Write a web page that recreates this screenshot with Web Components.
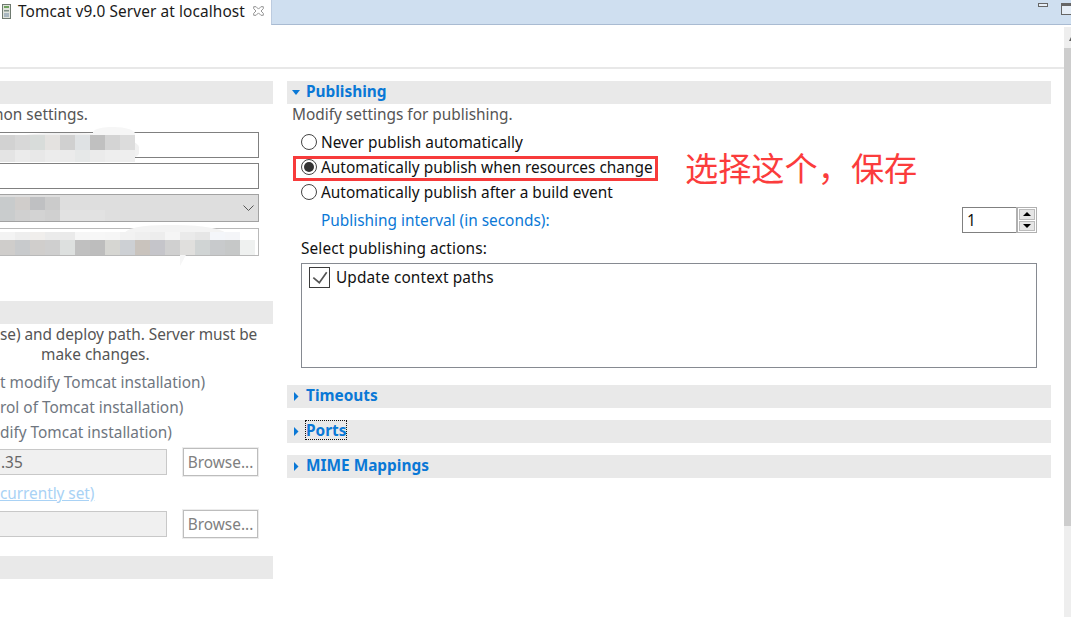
<!DOCTYPE html>
<html lang="en"><head><meta charset="utf-8"><title>Tomcat v9.0 Server at localhost</title>
<style>html,body{margin:0;height:617px;overflow:hidden;background:#fff;font-family:"Noto Sans","Noto Sans CJK SC",sans-serif}</style></head>
<body>
<server-editor></server-editor>
<script>
const def=(name,css,html)=>{customElements.define(name,class extends HTMLElement{
  constructor(){super();this.attachShadow({mode:'open'}).innerHTML=`<style>${css}</style>${typeof html==='function'?'':html}`}
  connectedCallback(){if(typeof html==='function'){this.shadowRoot.innerHTML=`<style>${css}</style>${html(this)}`}}
})};
const F='font:15.4px/20px "Noto Sans","Noto Sans CJK SC",sans-serif;';

def('editor-tabbar',`:host{display:flex;height:25px;box-sizing:border-box;position:relative;${F}}
.tab{width:271px;display:flex;align-items:flex-start;background:#fff}
.tab svg.i{margin:4px 0 0 2px;flex:none}
.tab span{margin:2px 0 0 7px;color:#1a1a1a;white-space:nowrap;letter-spacing:.1px}
.tab svg.x{position:absolute;left:253px;top:6px}
.rest{flex:1;display:flex;gap:13px;justify-content:flex-end;background:#cfdff0;border-left:1px solid #bccbdf;border-bottom:1px solid #a9bbd2;overflow:hidden;align-items:flex-start}
.min{border:1px solid #666;margin-top:3px;background:#e6eef7;width:8px;height:2px}
.max{width:16px;flex:none;height:8px;border:1px solid #666;border-top-width:3px;margin:3px -8px 0 0;background:#e6eef7}`,
`<div class="tab"><svg class="i" width="9" height="15" viewBox="0 0 9 15"><rect x=".5" y=".5" width="8" height="14" fill="#dfe3dc" stroke="#6f7a70"/><rect x="2" y="2" width="5" height="2" fill="#6fa35f"/><rect x="2" y="6" width="5" height="1.5" fill="#7f8f86"/><rect x="2" y="9" width="5" height="4" fill="#a9b7c0"/></svg><span>Tomcat v9.0 Server at localhost</span>
<svg class="x" width="11" height="10" viewBox="0 0 11 10" fill="#fff" stroke="#8a8a8a" stroke-width=".9"><path d="M.7.7h2.4l2.4 2.4L7.9.7h2.4v2L8 5l2.3 2.3v2H7.9L5.5 6.9 3.1 9.3H.7v-2L3 5 .7 2.7z"/></svg></div>
<div class="rest"><div class="min"></div><div class="max"></div></div>`);

def('section-head',`:host{display:flex;align-items:flex-start;height:23px;background:#e9e9e9;color:#0a78d6;font:700 15.4px/20px "Noto Sans","Noto Sans CJK SC",sans-serif;position:relative;padding-left:19px;white-space:nowrap}
svg{position:absolute;fill:#0a78d6}
span{margin-top:1px;height:18px}
.open{left:5px;top:9px}.closed{left:7px;top:6.5px}
.f{outline:1px dotted #111}`,
el=>`${el.hasAttribute('open')?'<svg class="open" width="8" height="5"><path d="M0 0h8L4 5z"/></svg>':el.hasAttribute('text')?'<svg class="closed" width="5" height="9"><path d="M0 0l4.5 4.5L0 9z"/></svg>':''}<span class="${el.hasAttribute('focus')?'f':''}">${el.getAttribute('text')||''}</span>`);

def('text-line',`:host{display:block;box-sizing:border-box;padding-top:1px;${F}color:var(--c,#555);white-space:nowrap;overflow:hidden}`,`<slot></slot>`);

def('radio-row',`:host{display:flex;align-items:center;height:25px;padding-left:14px;${F}color:#111;white-space:nowrap;letter-spacing:.01px}
i{width:14px;height:14px;border:1px solid #444;border-radius:50%;margin-right:4px;display:grid;place-items:center;background:#fff;flex:none}
b{width:10px;height:10px;border-radius:50%;background:#333}
span{padding-top:2px}`,
el=>`<i>${el.hasAttribute('checked')?'<b></b>':''}</i><span><slot></slot></span>`);

def('spin-box',`:host{display:flex;width:75px;height:26px;box-sizing:border-box;${F}color:#111}
.v{width:54px;box-sizing:border-box;border:1px solid #808080;border-right:0;padding:3px 0 0 4px;line-height:20px}
.b{flex:1;border:1px solid #b0b0b0;border-left:2px solid #b0b0b0;display:flex;flex-direction:column;gap:1px;padding:1px;background:#fff}
.b div{flex:1;background:#e6e6e6;border:1px solid #bbb;display:grid;place-items:center}
svg{display:block}`,
`<div class="v"><slot></slot></div><div class="b"><div><svg width="8" height="4"><path d="M4 0l4 4H0z"/></svg></div><div><svg width="8" height="4"><path d="M0 0h8L4 4z"/></svg></div></div>`);

def('check-row',`:host{display:flex;align-items:flex-start;${F}color:#111;white-space:nowrap;letter-spacing:.12px}
.c{width:19px;height:19px;border:1px solid #3c3c3c;margin:0 6px 0 0;flex:none;background:#fff}
svg{display:block}
span{margin-top:1px}`,
`<div class="c"><svg width="19" height="19" viewBox="1 1 19 19"><path d="M4.3 10.7l6 5L17.7 5.3" fill="none" stroke="#555" stroke-width="1.7"/></svg></div><span><slot></slot></span>`);

def('text-field',`:host{display:flex;align-items:center;position:relative;box-sizing:border-box;${F}border:1px solid #808080;background:#fff;color:#666;padding:2px 0 0 2px}
:host([combo]){background:#dedede;border:1px solid #a2a2a2}
:host([off]){background:#f0f0f0;border:1px solid #c8c8c8}
:host([faint]){border-color:#b9b9b9}
svg{position:absolute;right:4px;top:50%;margin-top:-3px}`,
el=>`<slot></slot>${el.hasAttribute('combo')?'<svg width="11" height="6"><path d="M.5.5l5 5 5-5" fill="none" stroke="#555"/></svg>':''}`);

def('browse-btn',`:host{display:grid;place-items:center;box-sizing:border-box;width:75px;height:28px;padding-top:2px;border:1px solid #bdbdbd;outline:1px solid #ececec;background:#fff;color:#808080;${F}}`,`<slot></slot>`);

def('blur-patch',`:host{position:absolute;display:grid;pointer-events:none;z-index:2}
div{height:100%}`,
el=>{const c=(el.getAttribute('cells')||'').split(' ');
 return `<style>:host{grid-template-columns:repeat(${c.length},15px);}</style>`+c.map(x=>`<div style="background:${x}"></div>`).join('')});

def('left-col',`:host{display:block;width:273px;flex:none;position:relative;overflow:hidden}
.gap{display:flex;flex-direction:column;margin:7px 0 0 -2px;width:261px}
.gap text-field+text-field{margin-top:5px}
.row{display:flex;gap:16px;width:258px;align-items:center}
.row text-field{width:169px;flex:none;height:26px;margin-left:-2px}
.smear{position:absolute;background:#f1f1f1;z-index:1;border-radius:40% 50% 30% 40%}
blur-patch{left:0}`,
`<section-head></section-head>
<text-line style="--c:#555;height:21px;margin-left:-6px">non settings.</text-line>
<div class="gap">
<text-field style="height:26px"></text-field>
<text-field style="height:26px"></text-field>
<text-field combo style="height:28px"></text-field>
<text-field faint style="height:28px;margin-top:6px"></text-field>
</div>
<i class="smear" style="left:0;top:52px;width:139px;height:29px"></i>
<i class="smear" style="left:93px;top:46px;width:42px;height:14px;background:#f6f6f6"></i>
<blur-patch cells="#d2d2d2 #d8d8d8 #d8dcda #e4e2e0 #d0d0d0 #dfe2e4 #c0c0c0 #d4d4d4 #dcdcdc" style="top:54px;height:15px"></blur-patch>
<blur-patch cells="#e4e4e4 #ebebeb #e8e8e8 #ececec #ebebeb #e6e8e8 #ebebeb #eeeeee #eeeeee" style="top:69px;height:12px"></blur-patch>
<blur-patch cells="#c8cbcc #d0cdcb #bfc0c2 #cbcbcb" style="top:116px;height:13px"></blur-patch>
<blur-patch cells="#c9cccd #d0d0d0 #d3d3d3 #d0d0d0 #e2e2e2 #e2e2e2 #e2e2e2 #dfdfdf" style="top:129px;height:11px"></blur-patch>
<i class="smear" style="left:125px;top:144px;width:102px;height:20px;background:#f3f3f3"></i>
<i class="smear" style="left:180px;top:172px;width:7px;height:13px;border-radius:0;background:#f6f6f6;clip-path:polygon(0 0,100% 0,0 100%)"></i>
<blur-patch cells="#f3f3f3 #eeeeee #f0eeec #ebebeb #eaeaea #f6f6f6 #f7f7f7 #f6f6f6 #f2f2f2 #efefef #ededed #f5f5f5 #eaeaea #e6e6e6 #f4f6fa #f4f5f8" style="top:151px;height:8px"></blur-patch>
<blur-patch cells="#cfcdcb #c8cacc #d0cecc #cfcfcf #dde0df #c0c0c0 #bdbdbd #d6d6d2 #cdd0d4 #c9c3bd #c5c5ca #d0d0d0 #e0dfdd #d0d4d4 #c8cacc #c6c8c8 #eff1f0" style="top:159px;height:15px"></blur-patch>
<section-head style="margin-top:45px"></section-head>
<text-line style="height:20px;letter-spacing:-.06px">se) and deploy path. Server must be</text-line>
<text-line style="height:20px;padding-left:41px">make changes.</text-line>
<text-line style="--c:#6f7680;margin-top:8px;height:25px">t modify Tomcat installation)</text-line>
<text-line style="--c:#6f7680;height:25px">rol of Tomcat installation)</text-line>
<text-line style="--c:#6f7680;height:25px">dify Tomcat installation)</text-line>
<div class="row" style="margin-top:1px"><text-field off>.35</text-field><browse-btn>Browse...</browse-btn></div>
<text-line style="--c:#a9d2f5;margin-top:7px;height:20px;letter-spacing:-.05px"><u>currently set)</u></text-line>
<div class="row" style="margin-top:7px"><text-field off></text-field><browse-btn>Browse...</browse-btn></div>
<section-head style="margin-top:18px"></section-head>`);

def('right-col',`:host{display:block;width:764px;flex:none;position:relative}
.d{margin:0 0 4px 5px;height:21px;--c:#555}
.mark{position:absolute;left:6px;top:75px;width:365px;height:25px;box-sizing:border-box;border:3px solid #f73b3b;z-index:1}
.note{position:absolute;left:398px;top:66px;font:33.2px/40px "Noto Sans CJK SC",sans-serif;color:#fb3c3c;white-space:nowrap;z-index:1}
.int{display:flex;justify-content:space-between;align-items:center;height:26px;margin:3px 14px 0 34px;--c:#0a78d6}
.int text-line{height:22px;padding-top:2px}
.lab{margin:5px 0 5px 14px;height:20px;--c:#111;letter-spacing:.12px}
.box{margin-left:14px;width:736px;height:105px;box-sizing:border-box;border:1px solid #868a91;padding:3px 0 0 7px}`,
`<section-head open text="Publishing"></section-head>
<text-line class="d">Modify settings for publishing.</text-line>
<div>
<radio-row>Never publish automatically</radio-row>
<radio-row checked>Automatically publish when resources change</radio-row>
<radio-row>Automatically publish after a build event</radio-row>
</div>
<i class="mark"></i>
<div class="note">选择这个，保存</div>
<div class="int"><text-line>Publishing interval (in seconds):</text-line><spin-box>1</spin-box></div>
<text-line class="lab">Select publishing actions:</text-line>
<div class="box"><check-row>Update context paths</check-row></div>
<section-head text="Timeouts" style="margin-top:17px"></section-head>
<section-head text="Ports" focus style="margin-top:12px"></section-head>
<section-head text="MIME Mappings" style="margin-top:12px"></section-head>`);

def('scroll-rail',`:host{display:flex;flex-direction:column;width:7px;flex:none;margin-top:2px;background:#eee;position:relative;height:590px}
.a{height:21px;position:relative}
.a svg{position:absolute;left:5px;top:10px}
.t{height:478px;background:#cdcdcd}`,
`<div class="a"><svg width="4" height="4"><path d="M0 4l2-4 2 0v4z" fill="#606060"/></svg></div><div class="t"></div>`);

def('server-editor',`:host{display:flex;flex-direction:column;width:1071px;height:617px;position:relative;overflow:hidden}
.body{display:flex;flex:1}
.main{flex:1;min-width:0}
.bar{height:42px}
.rule{height:2px;background:#e8e8e8}
.cols{display:flex;gap:14px;padding-top:12px}`,
`<editor-tabbar></editor-tabbar>
<div class="body"><div class="main"><div class="bar"></div><div class="rule"></div>
<div class="cols"><left-col></left-col><right-col></right-col></div></div>
<scroll-rail></scroll-rail></div>`);
</script>
</body></html>
